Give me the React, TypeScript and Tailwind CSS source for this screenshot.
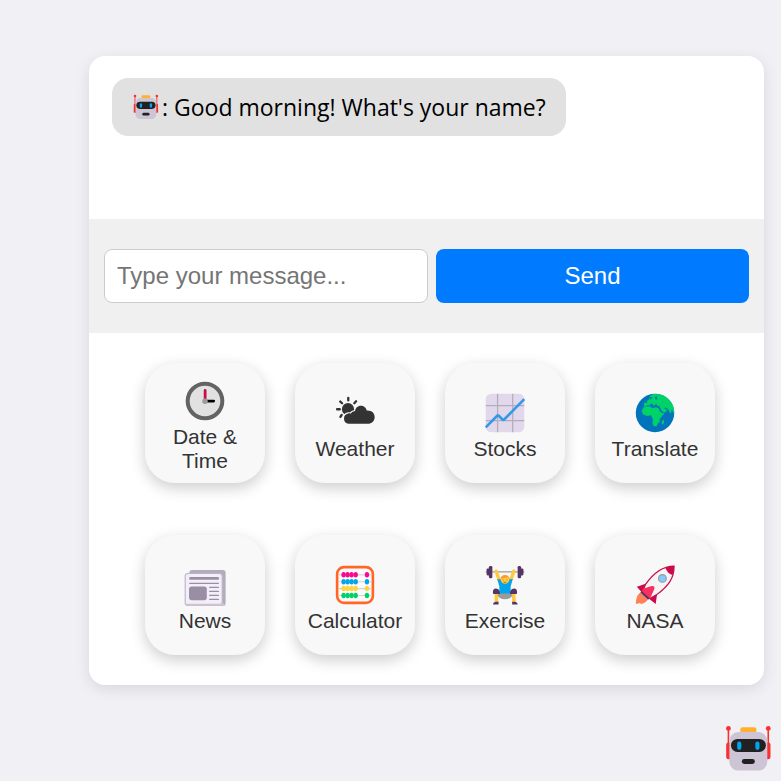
import type { ReactNode } from "react";

function Robot({ className }: { className: string }) {
  return (
    <svg viewBox="0 0 32 32" className={className} aria-hidden="true">
      <path d="M3.4 3.3V14M28.4 3.3V14" stroke="#F8312F" strokeWidth="1" />
      <circle cx="3.4" cy="3.4" r="1.5" fill="#F8312F" />
      <circle cx="28.4" cy="3.4" r="1.5" fill="#F8312F" />
      <rect x="2" y="12.3" width="4" height="10.4" rx="1.4" fill="#F8312F" />
      <rect x="25.8" y="12.3" width="4" height="10.4" rx="1.4" fill="#F8312F" />
      <rect x="10.8" y="2.7" width="10.2" height="3.4" rx="1.5" fill="#FFB02E" />
      <rect x="4" y="5.7" width="23.8" height="24.1" rx="5.5" fill="#CDC4D6" />
      <rect x="5" y="10" width="21.9" height="8.2" rx="4.1" fill="#212121" />
      <rect x="8.9" y="11.6" width="2.6" height="5.3" rx="1.3" fill="#00A6ED" />
      <rect x="20.3" y="11.6" width="2.6" height="5.3" rx="1.3" fill="#00A6ED" />
      <rect x="11.8" y="22.6" width="8.2" height="3.1" rx="1.55" fill="#212121" />
    </svg>
  );
}

const clock = (
  <>
    <circle cx="16" cy="16" r="12.6" fill="#E1E1E1" stroke="#636363" strokeWidth="2.9" />
    <path d="M16.3 16h6" stroke="#000" strokeWidth="2" strokeLinecap="round" />
    <path d="M16.1 16V8.3" stroke="#CA0B4A" strokeWidth="2" strokeLinecap="round" />
    <circle cx="16" cy="16.2" r="2" fill="#9B9B9B" />
  </>
);

const weather = (
  <>
    <circle cx="10.9" cy="13.2" r="4.4" fill="#333" />
    <path
      d="M11.1 5v1.7M3 13.3h1.9M5.3 7.7l1.3 1.2M16.8 7.5l-1.3 1.4M6.3 17.4l-.9 1.4"
      stroke="#333"
      strokeWidth="1.7"
      strokeLinecap="round"
    />
    <path
      d="M11.3 23.8a3.8 3.8 0 0 1-.2-7.5c.8-.1 1.4 0 1.9.2.5-1.2 1.6-1.9 3-1.7.2-2.4 2-4.1 4.2-4.1s4 1.5 4.4 3.6c3.3-.3 5.7 1.8 5.7 4.7 0 2.7-2.2 4.8-5 4.8z"
      fill="#333"
      stroke="#f8f8f8"
      strokeWidth="1.6"
      paintOrder="stroke"
    />
  </>
);

const stocks = (
  <>
    <rect x="2" y="2" width="28" height="28" rx="4" fill="#E1D8EC" />
    <path d="M10.6 2v28M21.6 2v28M2 10.6h28M2 21.6h28" stroke="#B4ACBC" strokeWidth=".9" />
    <path d="M2 26.4 10.3 18q.6-.5 1.2 0l2.6 2.7q.7.5 1.3 0L30 5.9" fill="none" stroke="#3499E8" strokeWidth="1.9" />
  </>
);

const globe = (
  <>
    <circle cx="16" cy="16" r="14" fill="#0074BA" />
    <path
      d="M8.2 11.3h4.3l1.6 1.2 2.4-.7 2.2.7 1 2.6 1.5.9 1.6.2-3.3 3.9-.3 2.8-1.3.8-.5 1.5c-.8.8-2 .6-2.5-.2l-.7-1.3.3-2.9-1.4-3.1-2.9.4-2.6-1-1.2-1.9.4-2z"
      fill="#00D26A"
    />
    <path
      d="M12.4 3.6 14.5 2.2 19.5 2.4C25.5 4 30 9 30 15.1l-.5 1-.7-1.8-.6-.6-.6 2.3-.9-.2-1-2.4-1.5-1-.6-.4-1.1.3.9.8 1 .4.1 1.2-1.9 1.2-1.8-1.5-1.4-2.5.3-1-1.5.2-1.2-1.5-1.2.4-.7 1.2-1-2-1.1-.2-.8 1.6-2-.3-.7 1-1.5-.4.1-2.3 2.3-.1-.2-1.5 1.5-.7.2-1z"
      fill="#00D26A"
    />
    <path d="m22.2 20.8.4 1.2-.5 2-.8.3-.4-1 .4-1.5z" fill="#00D26A" />
    <path d="m12.1 4.5 1.8-.2-.4 1.5-1.1.4zM15.8 4.6l1.8-.9-.5 1.3.9.5-1.3 1z" fill="#0074BA" />
  </>
);

const news = (
  <>
    <rect x="4.6" y="5.1" width="26.4" height="26" rx="2" fill="#B4ACBC" />
    <rect x="1.6" y="7.6" width="26.9" height="23.3" rx="2" fill="#F3EEF8" stroke="#BDB3C8" strokeWidth=".8" />
    <path d="M28.5 28.5 31 31H4l-2-1.3h25z" fill="#CDC4D6" />
    <path d="M5.5 11.2h19.7" stroke="#998EA4" strokeWidth="2.1" strokeLinecap="round" />
    <path d="M4.9 14.8h20.9M19.4 17.8h6.4M19.4 20.7h6.4M19.4 23.6h6.4M19.4 26.5h6.4" stroke="#998EA4" strokeWidth=".9" strokeLinecap="round" />
    <rect x="4.4" y="17" width="12.9" height="10" rx="2" fill="#998EA4" />
  </>
);

const beadRows = [
  { y: 8.6, color: "#F70A8D" },
  { y: 13.6, color: "#00A6ED" },
  { y: 18.6, color: "#FCD53F" },
  { y: 23.6, color: "#00D26A" },
];

const abacus = (
  <>
    <rect x="3" y="3" width="26" height="26" rx="5" fill="#fbf9fc" stroke="#FF6723" strokeWidth="1.9" />
    {beadRows.map((row) => (
      <g key={row.y} fill={row.color}>
        <path d={`M4 ${row.y}h24`} stroke="#D3D3D3" strokeWidth=".8" />
        {[7.7, 10.6, 13.5, 16.5, 24.7].map((x) => (
          <ellipse key={x} cx={x} cy={row.y} rx="1.6" ry="2" />
        ))}
      </g>
    ))}
  </>
);

const lifter = (
  <>
    <path d="M2 6.5h28" stroke="#9B9B9B" strokeWidth=".9" />
    <g fill="#533566">
      <rect x="2.6" y="4" width="2.4" height="5" rx=".8" />
      <rect x="4.3" y="2.1" width="2.5" height="9" rx="1" />
      <rect x="27" y="4" width="2.4" height="5" rx=".8" />
      <rect x="25.2" y="2.1" width="2.5" height="9" rx="1" />
    </g>
    <path d="M9.6 6 12.3 14M22.4 6l-2.7 8" stroke="#FFC83D" strokeWidth="2.5" strokeLinecap="round" />
    <path d="M9.8 20.8v8M22.2 20.8l.4 8" stroke="#FFC83D" strokeWidth="2.6" />
    <ellipse cx="16" cy="23.4" rx="5.2" ry="3" fill="#9B9B9B" />
    <path d="m10.4 11.6 2.6.3 1.8 1.6h2.4l1.8-1.6 2.6-.3-1.5 5.4v5.2h-8.2V17z" fill="#00A6ED" />
    <path d="M9.4 18.6c2 .1 3 1.3 3 4H7.5c-.8-2.1 0-3.9 1.9-4zM22.6 18.6c-2 .1-3 1.3-3 4h4.9c.8-2.1 0-3.9-1.9-4z" fill="#533566" />
    <path d="M7.3 30.2c0-1.3 1.1-1.9 2.4-2h1.6v2zM25.2 30.2c0-1.3-1.1-1.9-2.4-2h-1.6v2z" fill="#533566" />
    <circle cx="16" cy="12" r="3.1" fill="#FFC83D" />
    <path d="M12.8 11.9c-.5-4.3 6.9-4.3 6.4 0-.6-.2-1.2-1.7-1.2-1.7-1.6 1.1-3.8.3-5.2 1.7z" fill="#FF9A2E" />
    <path d="M14.7 12.1v.5M17.3 12.1v.5M15 13.9q1 .5 2 0" fill="none" stroke="#CA5C1B" strokeWidth=".6" />
  </>
);

const rocket = (
  <>
    <path d="M5.6 21.5c-2 1-3.5 3.5-3.5 8.2 1.2.2 2-.5 2.6-.4.6 0 1 .8 2 .4 1.7-.6 3.6-2 4.1-3.4z" fill="#FF8257" />
    <path d="M10.2 14.8 2.8 17.2l3.5 4.1zM17.7 21l-1.2 8.8-4.8-3.8z" fill="#CA0B4A" />
    <path d="M29.8 2.3C21.2 2.3 14.7 7.5 9 15.8l-2 4.8 5.3 5.2 5-2.8C25.8 16.7 30 11 29.8 2.3z" fill="#F4F4F4" stroke="#CA0B4A" strokeWidth=".9" />
    <path d="M23.7 3.6c2.1-.9 4.2-1.4 6.3-1.4.1 2.3-.4 4.4-1.4 6.5-2.3-.7-4.3-2.7-4.9-5.1z" fill="#CA0B4A" />
    <circle cx="21.4" cy="11.2" r="2.8" fill="#83CBFF" stroke="#9B9B9B" strokeWidth=".9" />
    <path d="M7.7 18.5 13 16.9c2-.4 3 .3 2.5 2l-3.1 7-6.3-4.8z" fill="#F92F60" />
    <path d="m5.9 20.9 5.6 5.3" stroke="#533566" strokeWidth="1.5" />
  </>
);

const tools: { label: string; icon: ReactNode }[] = [
  { label: "Date & Time", icon: clock },
  { label: "Weather", icon: weather },
  { label: "Stocks", icon: stocks },
  { label: "Translate", icon: globe },
  { label: "News", icon: news },
  { label: "Calculator", icon: abacus },
  { label: "Exercise", icon: lifter },
  { label: "NASA", icon: rocket },
];

export default function App() {
  return (
    <div className="min-h-screen bg-[#f0f0f5] pt-14 pr-[17px] pb-24 pl-[89px] font-['Liberation_Sans',Arial,sans-serif]">
      <main className="overflow-hidden rounded-2xl bg-white shadow-[0_4px_15px_rgba(0,0,0,0.1)]">
        <section className="min-h-[163px] px-[23px] pt-[22px] pb-6">
          <p className="flex min-h-[58px] w-fit items-center gap-0.5 rounded-2xl bg-[#e1e1e1] px-5 py-3 font-['Open_Sans','Noto_Sans',sans-serif] text-[23px] leading-[34px] text-black">
            <Robot className="size-7 shrink-0" />
            <span>: Good morning! What's your name?</span>
          </p>
        </section>

        <form
          className="grid grid-cols-[324fr_313fr] gap-2 bg-[#f0f0f0] px-[15px] py-[30px]"
          onSubmit={(event) => event.preventDefault()}
        >
          <input
            type="text"
            aria-label="Message"
            placeholder="Type your message..."
            className="h-[54px] w-full min-w-0 rounded-lg border border-[#ccc] bg-white px-3 text-2xl text-black placeholder:text-[#757575]"
          />
          <button type="submit" className="h-[54px] rounded-lg bg-[#007bff] text-2xl text-white">
            Send
          </button>
        </form>

        <nav className="flex justify-center py-[30px] pl-[7px]">
          <div className="grid grid-cols-4 gap-x-[30px] gap-y-[52px]">
            {tools.map((tool) => (
              <button
                key={tool.label}
                type="button"
                className="flex size-[120px] flex-col items-center justify-center rounded-[30px] bg-[#f8f8f8] text-[21px] leading-6 text-[#333] shadow-[0_5px_15px_rgba(0,0,0,0.2)]"
              >
                <span className="flex h-[52px] items-end pb-0.5">
                  <svg viewBox="0 0 32 32" className="size-11" aria-hidden="true">
                    {tool.icon}
                  </svg>
                </span>
                <span className="max-w-24 text-center">{tool.label}</span>
              </button>
            ))}
          </div>
        </nav>
      </main>

      <button type="button" aria-label="Open assistant" className="fixed right-[7px] bottom-[7px]">
        <Robot className="size-[51px]" />
      </button>
    </div>
  );
}
